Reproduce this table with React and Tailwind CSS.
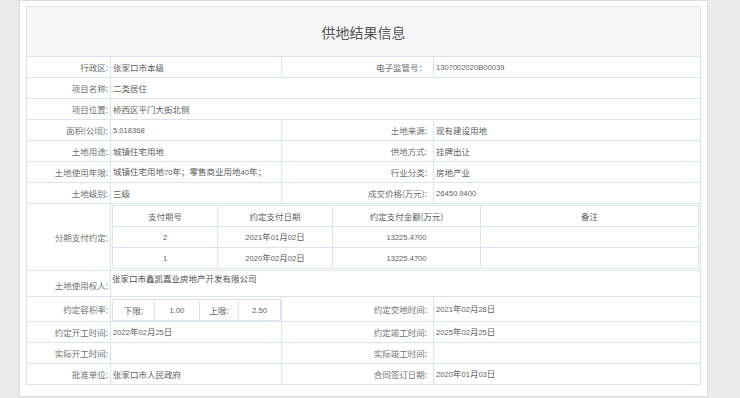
import React from "react";

function T({ s }) {
  if (!s) return null;
  const parts = s.split(/([0-9A-Z.]+)/);
  return (
    <>
      {parts.map((p, i) =>
        /^[0-9A-Z.]+$/.test(p) ? (
          <span key={i} className="font-['Liberation_Sans',sans-serif] text-[7.6px]">
            {p}
          </span>
        ) : (
          <span key={i}>{p}</span>
        )
      )}
    </>
  );
}

const L = ({ children }) => (
  <td className="border border-[#d9e4f0] text-right pr-[2px] text-[#707070] align-middle whitespace-nowrap">
    {children}
  </td>
);
const L2 = ({ children }) => (
  <td className="border border-[#d9e4f0] text-right pr-[6px] text-[#707070] align-middle whitespace-nowrap">
    {children}
  </td>
);
const V = ({ children, span }) => (
  <td colSpan={span} className="border border-[#d9e4f0] pl-[2px] text-[#606060] align-middle whitespace-nowrap">
    <T s={children} />
  </td>
);

export default function App() {
  return (
    <div className="w-[740px] h-[398px] bg-[#ebebeb] overflow-hidden font-['Noto_Sans_CJK_SC',sans-serif] text-[8.5px] leading-none">
      <div className="ml-[19px] w-[689px] h-[397px] bg-white border border-[#dcdcdc] pt-[5px] pl-[6px]">
        <table className="table-fixed border-collapse w-[674px]">
          <colgroup>
            <col className="w-[84px]" />
            <col className="w-[171px]" />
            <col className="w-[152px]" />
            <col className="w-[267px]" />
          </colgroup>
          <tbody>
            <tr className="h-[50px]">
              <td colSpan={4} className="border border-[#d9e4f0] bg-[#f7f7f7] text-center text-[14px] text-[#555] align-middle">
                供地结果信息
              </td>
            </tr>
            <tr className="h-[21px]">
              <L>行政区:</L>
              <V>张家口市本级</V>
              <L2>电子监管号：</L2>
              <td className="border border-[#d9e4f0] pl-[2px] text-[#606060]">
                <T s="1307002020B00039" />
              </td>
            </tr>
            <tr className="h-[21px]">
              <L>项目名称:</L>
              <V span={3}>二类居住</V>
            </tr>
            <tr className="h-[21px]">
              <L>项目位置:</L>
              <V span={3}>桥西区平门大街北侧</V>
            </tr>
            <tr className="h-[21px]">
              <L>面积(公顷):</L>
              <V>5.018368</V>
              <L2>土地来源:</L2>
              <V>现有建设用地</V>
            </tr>
            <tr className="h-[21px]">
              <L>土地用途:</L>
              <V>城镇住宅用地</V>
              <L2>供地方式:</L2>
              <V>挂牌出让</V>
            </tr>
            <tr className="h-[21px]">
              <L>土地使用年限:</L>
              <V>城镇住宅用地70年；零售商业用地40年；</V>
              <L2>行业分类:</L2>
              <V>房地产业</V>
            </tr>
            <tr className="h-[21px]">
              <L>土地级别:</L>
              <V>三级</V>
              <L2>成交价格(万元):</L2>
              <V>26450.9400</V>
            </tr>
            <tr>
              <L>分期支付约定:</L>
              <td colSpan={3} className="border border-[#d9e4f0] p-[1px]">
                <table className="table-fixed border-collapse w-full text-[#606060]">
                  <colgroup>
                    <col className="w-[105px]" />
                    <col className="w-[115px]" />
                    <col className="w-[148px]" />
                    <col />
                  </colgroup>
                  <tbody>
                    <tr className="h-[21px] text-center">
                      <td className="border border-[#d9e4f0]">支付期号</td>
                      <td className="border border-[#d9e4f0]">约定支付日期</td>
                      <td className="border border-[#d9e4f0]">约定支付金额(万元)</td>
                      <td className="border border-[#d9e4f0]">备注</td>
                    </tr>
                    <tr className="h-[21px] text-center">
                      <td className="border border-[#d9e4f0]"><T s="2" /></td>
                      <td className="border border-[#d9e4f0]"><T s="2021年01月02日" /></td>
                      <td className="border border-[#d9e4f0]"><T s="13225.4700" /></td>
                      <td className="border border-[#d9e4f0]"></td>
                    </tr>
                    <tr className="h-[21px] text-center">
                      <td className="border border-[#d9e4f0]"><T s="1" /></td>
                      <td className="border border-[#d9e4f0]"><T s="2020年02月02日" /></td>
                      <td className="border border-[#d9e4f0]"><T s="13225.4700" /></td>
                      <td className="border border-[#d9e4f0]"></td>
                    </tr>
                  </tbody>
                </table>
              </td>
            </tr>
            <tr className="h-[26px]">
              <td className="border border-[#d9e4f0] text-right pr-[2px] text-[#707070] align-middle pt-[4px]">土地使用权人:</td>
              <td colSpan={3} className="border border-[#d9e4f0] pl-[1px] pt-[3px] text-[#505050] align-top">
                张家口市鑫凯嘉业房地产开发有限公司
              </td>
            </tr>
            <tr className="h-[25px]">
              <L>约定容积率:</L>
              <td className="border border-[#d9e4f0] pl-[1px] pt-[2px] pb-0 align-top">
                <table className="table-fixed border-collapse w-[168px] text-[#606060]">
                  <colgroup>
                    <col className="w-[42px]" />
                    <col className="w-[45px]" />
                    <col className="w-[39px]" />
                    <col className="w-[42px]" />
                  </colgroup>
                  <tbody>
                    <tr className="h-[21px] text-center">
                      <td className="border border-[#d9e4f0]">下限:</td>
                      <td className="border border-[#d9e4f0]"><T s="1.00" /></td>
                      <td className="border border-[#d9e4f0]">上限:</td>
                      <td className="border border-[#d9e4f0]"><T s="2.50" /></td>
                    </tr>
                  </tbody>
                </table>
              </td>
              <L2>约定交地时间:</L2>
              <V>2021年02月28日</V>
            </tr>
            <tr className="h-[21px]">
              <L>约定开工时间:</L>
              <V>2022年02月25日</V>
              <L2>约定竣工时间:</L2>
              <V>2025年02月25日</V>
            </tr>
            <tr className="h-[21px]">
              <L>实际开工时间:</L>
              <V></V>
              <L2>实际竣工时间:</L2>
              <V></V>
            </tr>
            <tr className="h-[21px]">
              <L>批准单位:</L>
              <V>张家口市人民政府</V>
              <L2>合同签订日期:</L2>
              <V>2020年01月03日</V>
            </tr>
          </tbody>
        </table>
      </div>
    </div>
  );
}
